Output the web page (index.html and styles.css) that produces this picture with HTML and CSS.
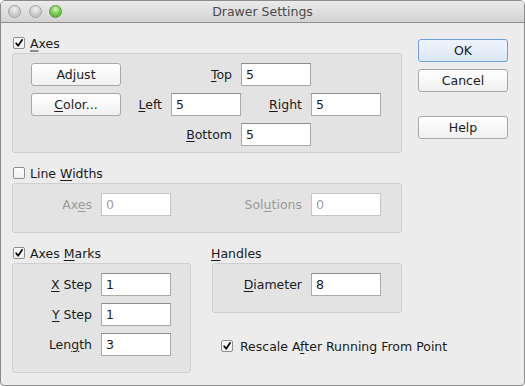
FILE: index.html
```html
<!DOCTYPE html>
<html lang="en">
<head>
    <meta charset="UTF-8">
    <title>Drawer Settings</title>
    <link rel="stylesheet" href="styles.css">
</head>
<body>
    <div class="window">
        <div class="titlebar">
            <div class="lights">
                <span class="light"></span>
                <span class="light"></span>
                <span class="light zoom"></span>
            </div>
            <div class="title">Drawer Settings</div>
            <div class="spacer"></div>
        </div>

        <div class="content">
            <div class="main">
                <div class="section-head">
                    <span class="check on"><svg viewBox="0 0 12 12"><path d="M2.6 6.2 L5 9.4 L9.8 2.2"/></svg></span>
                    <span><u class="focus">A</u>xes</span>
                </div>
                <div class="group axes-grid">
                    <button class="btn adjust">Adjust</button>
                    <label class="lbl top-lbl"><span><u>T</u>op</span></label>
                    <input class="field top-field" type="text" value="5">
                    <button class="btn color"><u>C</u>olor...</button>
                    <label class="lbl left-lbl"><span><u>L</u>eft</span></label>
                    <input class="field left-field" type="text" value="5">
                    <label class="lbl right-lbl"><span><u>R</u>ight</span></label>
                    <input class="field right-field" type="text" value="5">
                    <label class="lbl bottom-lbl"><span><u>B</u>ottom</span></label>
                    <input class="field bottom-field" type="text" value="5">
                </div>

                <div class="section-head spaced">
                    <span class="check"></span>
                    <span>Line <u>W</u>idths</span>
                </div>
                <div class="group widths">
                    <label class="lbl disabled w-axes"><span>Ax<u>e</u>s</span></label>
                    <input class="field" type="text" value="0" disabled>
                    <label class="lbl disabled w-sol"><span>Sol<u>u</u>tions</span></label>
                    <input class="field" type="text" value="0" disabled>
                </div>

                <div class="lower">
                    <div class="marks-col">
                        <div class="section-head">
                            <span class="check on"><svg viewBox="0 0 12 12"><path d="M2.6 6.2 L5 9.4 L9.8 2.2"/></svg></span>
                            <span>Axes <u>M</u>arks</span>
                        </div>
                        <div class="group marks">
                            <div class="row">
                                <label class="lbl m-lbl"><span><u>X</u> Step</span></label>
                                <input class="field" type="text" value="1">
                            </div>
                            <div class="row">
                                <label class="lbl m-lbl"><span><u>Y</u> Step</span></label>
                                <input class="field" type="text" value="1">
                            </div>
                            <div class="row">
                                <label class="lbl m-lbl"><span>Len<u>g</u>th</span></label>
                                <input class="field" type="text" value="3">
                            </div>
                        </div>
                    </div>
                    <div class="handles-col">
                        <div class="section-head plain"><span><u>H</u>andles</span></div>
                        <div class="group handles">
                            <label class="lbl h-lbl"><span><u>D</u>iameter</span></label>
                            <input class="field" type="text" value="8">
                        </div>
                        <div class="rescale">
                            <span class="check on"><svg viewBox="0 0 12 12"><path d="M2.6 6.2 L5 9.4 L9.8 2.2"/></svg></span>
                            <span>Rescale A<u>f</u>ter Running From Point</span>
                        </div>
                    </div>
                </div>
            </div>

            <div class="side">
                <button class="btn default">OK</button>
                <button class="btn">Cancel</button>
                <button class="btn help">Help</button>
            </div>
        </div>
    </div>
</body>
</html>
```

FILE: styles.css
```css
* {
    margin: 0;
    padding: 0;
    box-sizing: border-box;
}

body {
    background: #ffffff;
    font-family: "DejaVu Sans", sans-serif;
    font-size: 12.5px;
    color: #1a1a1a;
}

u {
    text-underline-offset: 2px;
}

u.focus {
    text-decoration-color: #8a8a8a;
    text-decoration-thickness: 2px;
}

.window {
    width: 525px;
    height: 386px;
    background: #ececec;
    border: 1px solid #8c8c8c;
    border-radius: 5px 5px 4px 4px;
    overflow: hidden;
    display: flex;
    flex-direction: column;
}

/* Title bar */
.titlebar {
    height: 22px;
    flex: none;
    display: grid;
    grid-template-columns: 61px 1fr 61px;
    align-items: center;
    background: linear-gradient(#ebebeb, #d3d3d3);
    border-bottom: 1px solid #8e8e8e;
}

.lights {
    display: flex;
    gap: 7.5px;
    padding-left: 7px;
}

.light {
    width: 13px;
    height: 13px;
    border-radius: 50%;
    border: 1px solid #a3a3a3;
    background: radial-gradient(circle at 50% 30%, #f2f2f2, #c9c9c9 60%, #b9b9b9);
}

.light.zoom {
    border-color: #5b9a3f;
    background: radial-gradient(circle at 50% 30%, #d3f5b8, #72c84c 55%, #4f9f2e);
}

.title {
    text-align: center;
    color: #4a4a4a;
}

/* Layout */
.content {
    flex: 1;
    display: flex;
    gap: 16px;
    padding: 10px 16px 0 11px;
}

.main {
    width: 390px;
    display: flex;
    flex-direction: column;
}

.side {
    width: 90px;
    display: flex;
    flex-direction: column;
    gap: 7px;
    margin-top: 6px;
}

.side .help {
    margin-top: 17px;
}

.section-head {
    height: 20px;
    display: flex;
    align-items: center;
    gap: 5px;
    padding-left: 1px;
    white-space: nowrap;
}

.section-head.spaced {
    margin-top: 10px;
}

.section-head.plain {
    padding-left: 0;
    margin-left: -1px;
}

.check {
    width: 12px;
    height: 12px;
    flex: none;
    border: 1px solid #8e8e8e;
    border-radius: 2px;
    background: linear-gradient(#ffffff, #f1f1f1);
    display: flex;
}

.check svg {
    width: 100%;
    height: 100%;
    overflow: visible;
}

.check path {
    fill: none;
    stroke: #000000;
    stroke-width: 2;
    stroke-linecap: round;
    stroke-linejoin: round;
}

.group {
    background: #e3e3e3;
    border: 1px solid #d0d0d0;
    border-radius: 3px;
}

/* Controls */
.btn {
    height: 23px;
    border: 1px solid #a8a8a8;
    border-radius: 3px;
    background: linear-gradient(#ffffff, #f0f0f0);
    font-family: inherit;
    font-size: inherit;
    color: #1a1a1a;
}

.btn.default {
    border-color: #6f9fd9;
    background: linear-gradient(#eef4fc, #dce8f7);
}

.lbl {
    display: flex;
    align-items: center;
    justify-content: flex-end;
    padding-right: 9px;
    white-space: nowrap;
}

.lbl.disabled {
    color: #9a9a9a;
}

.field {
    width: 70px;
    height: 23px;
    border: 1px solid #a9a9a9;
    border-top-color: #8f8f8f;
    background: #ffffff;
    padding-left: 4px;
    font-family: inherit;
    font-size: inherit;
    color: #1a1a1a;
    outline: none;
}

.field:disabled {
    border-color: #c6c6c6;
    color: #a0a0a0;
}

/* Axes group */
.axes-grid {
    display: grid;
    grid-template-columns: 90px 50px 70px 70px 70px;
    grid-template-rows: 23px 23px 23px;
    row-gap: 7px;
    padding: 9px 0 6px 18px;
}

.adjust { grid-column: 1; grid-row: 1; }
.top-lbl { grid-column: 3; grid-row: 1; }
.top-field { grid-column: 4; grid-row: 1; }
.color { grid-column: 1; grid-row: 2; }
.left-lbl { grid-column: 2; grid-row: 2; }
.left-field { grid-column: 3; grid-row: 2; }
.right-lbl { grid-column: 4; grid-row: 2; }
.right-field { grid-column: 5; grid-row: 2; }
.bottom-lbl { grid-column: 3; grid-row: 3; }
.bottom-field { grid-column: 4; grid-row: 3; }

/* Line widths group */
.widths {
    display: flex;
    padding: 9px 0 16px;
}

.w-axes { width: 88px; }
.w-sol { width: 140px; }

/* Marks and handles */
.lower {
    display: flex;
    gap: 21px;
    margin-top: 10px;
}

.marks-col {
    width: 179px;
}

.handles-col {
    width: 190px;
}

.marks {
    display: flex;
    flex-direction: column;
    gap: 7px;
    padding: 9px 0 16px;
}

.row {
    display: flex;
}

.m-lbl { width: 88px; }

.handles {
    display: flex;
    padding: 9px 0 16px;
}

.h-lbl { width: 98px; }

.rescale {
    height: 20px;
    display: flex;
    align-items: center;
    gap: 7px;
    margin-top: 23px;
    padding-left: 9px;
    white-space: nowrap;
}
```
